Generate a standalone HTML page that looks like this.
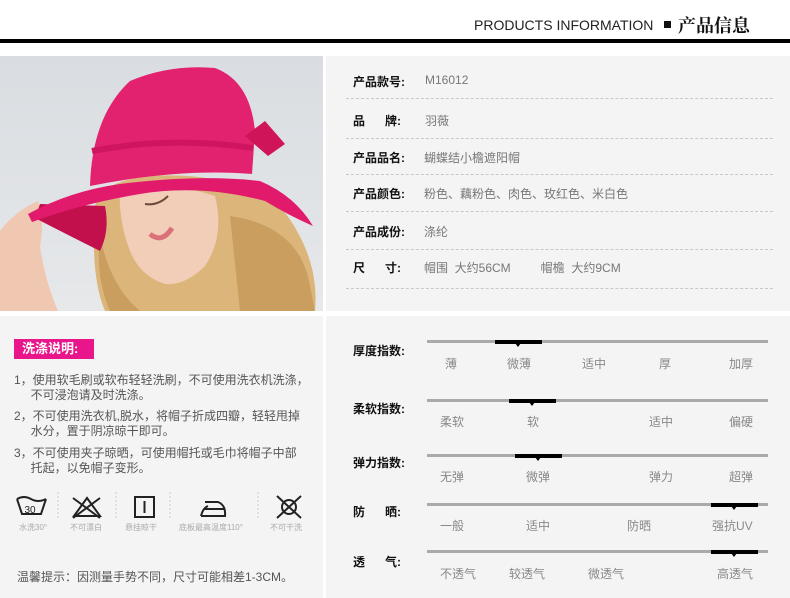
<!DOCTYPE html>
<html><head><meta charset="utf-8"><style>
*{margin:0;padding:0;box-sizing:border-box}
body{width:790px;height:598px;background:#fff;position:relative;overflow:hidden;font-family:"Liberation Sans","Noto Sans CJK SC",sans-serif}
.a{position:absolute;white-space:nowrap}
.lb{font-size:12px;font-weight:bold;color:#111}
.v{font-size:12px;color:#777}
.d{position:absolute;left:346px;width:427px;border-top:1px dashed #c8c8c8}
.bar{position:absolute;left:427px;width:341px;height:3px;background:#aaa}
.blk{position:absolute;height:4px;background:#000;width:47px}
.blk:after{content:"";position:absolute;left:20px;top:3px;border-left:3px solid transparent;border-right:3px solid transparent;border-top:4px solid #000}
.o{position:absolute;font-size:12px;color:#888;white-space:nowrap}
.t{font-size:12px;color:#555;line-height:15px}
.ic{position:absolute;top:522px;font-size:8px;color:#aaa;white-space:nowrap}
</style></head><body>
<div class="a" style="left:474px;top:17px;font-size:14px;color:#222">PRODUCTS INFORMATION</div>
<div class="a" style="left:664px;top:21px;width:7px;height:7px;background:#111"></div>
<div class="a" style="left:678px;top:12px;font-size:18px;font-weight:bold;color:#111;font-family:'Noto Serif CJK SC',serif">产品信息</div>
<div class="a" style="left:0;top:39px;width:790px;height:4px;background:#000"></div>

<svg class="a" style="left:0;top:56px" width="323" height="255" viewBox="0 0 323 255">
<defs><linearGradient id="bg" x1="0" y1="0" x2="0" y2="1"><stop offset="0" stop-color="#d9dde1"/><stop offset="1" stop-color="#e6e8ea"/></linearGradient></defs>
<rect width="323" height="255" fill="url(#bg)"/>
<path d="M95 150 Q100 125 150 120 Q230 115 280 150 Q320 200 315 255 L105 255 Q90 220 95 150Z" fill="#dcb57a"/>
<path d="M230 160 Q300 170 310 230 L315 255 L240 255Z" fill="#c99e5e"/>
<path d="M100 180 Q110 230 140 255 L110 255 Q95 220 100 180Z" fill="#c99e5e"/>
<path d="M120 130 Q170 125 215 140 Q225 180 205 210 Q185 230 165 228 Q140 220 130 195 Q118 165 120 130Z" fill="#f2cdb8"/>
<path d="M150 178 Q162 188 172 172" stroke="#d9707a" stroke-width="5" fill="none"/>
<path d="M145 148 Q158 150 168 140" stroke="#6a4a3a" stroke-width="2" fill="none"/>
<path d="M0 175 Q15 155 38 145 Q45 165 40 190 Q45 225 58 255 L0 255Z" fill="#f0c8b2"/>
<path d="M35 162 Q60 175 100 195 Q110 175 105 150 L40 148Z" fill="#c2104c"/>
<path d="M28 158 Q70 135 120 128 Q200 118 260 125 Q295 140 313 170 Q290 160 265 145 Q200 128 140 138 Q80 148 32 166Z" fill="#e11a6c"/>
<path d="M90 130 Q92 60 130 25 Q170 8 215 12 Q250 25 255 75 L252 118 Q180 112 90 130Z" fill="#e3226f"/>
<path d="M92 95 Q170 80 253 92" stroke="#cf1560" stroke-width="6" fill="none"/>
<path d="M245 80 L265 65 L285 88 L268 100Z" fill="#d0145a"/>
</svg>

<div class="a" style="left:326px;top:56px;width:464px;height:255px;background:#f4f4f4"></div>
<div class="a lb" style="left:353px;top:73px">产品款号:</div><div class="a v" style="left:425px;top:73px">M16012</div>
<div class="d" style="top:98px"></div>
<div class="a lb" style="left:353px;top:112px">品&nbsp;&nbsp;&nbsp;&nbsp;&nbsp;&nbsp;牌:</div><div class="a v" style="left:425px;top:112px">羽薇</div>
<div class="d" style="top:138px"></div>
<div class="a lb" style="left:353px;top:149px">产品品名:</div><div class="a v" style="left:424px;top:149px">蝴蝶结小檐遮阳帽</div>
<div class="d" style="top:174px"></div>
<div class="a lb" style="left:353px;top:185px">产品颜色:</div><div class="a v" style="left:424px;top:185px">粉色、藕粉色、肉色、玫红色、米白色</div>
<div class="d" style="top:211px"></div>
<div class="a lb" style="left:353px;top:223px">产品成份:</div><div class="a v" style="left:424px;top:223px">涤纶</div>
<div class="d" style="top:249px"></div>
<div class="a lb" style="left:353px;top:259px">尺&nbsp;&nbsp;&nbsp;&nbsp;&nbsp;&nbsp;寸:</div><div class="a v" style="left:424px;top:259px">帽围&nbsp; 大约56CM&nbsp;&nbsp;&nbsp;&nbsp;&nbsp;&nbsp;&nbsp;&nbsp; 帽檐&nbsp; 大约9CM</div>
<div class="d" style="top:288px"></div>

<div class="a" style="left:0;top:316px;width:323px;height:282px;background:#f4f4f4"></div>
<div class="a" style="left:14px;top:339px;width:80px;height:20px;background:#e8168a;color:#fff;font-size:13px;font-weight:bold;line-height:20px;padding-left:8px">洗涤说明:</div>
<div class="a t" style="left:14px;top:373px">1，使用软毛刷或软布轻轻洗刷，不可使用洗衣机洗涤，<br>&nbsp;&nbsp;&nbsp;&nbsp;&nbsp;不可浸泡请及时洗涤。</div>
<div class="a t" style="left:14px;top:409px">2，不可使用洗衣机,脱水，将帽子折成四瓣，轻轻甩掉<br>&nbsp;&nbsp;&nbsp;&nbsp;&nbsp;水分，置于阴凉晾干即可。</div>
<div class="a t" style="left:14px;top:446px">3，不可使用夹子晾晒，可使用帽托或毛巾将帽子中部<br>&nbsp;&nbsp;&nbsp;&nbsp;&nbsp;托起，以免帽子变形。</div>
<svg class="a" style="left:0;top:490px" width="323" height="32">
<g stroke="#222" stroke-width="2" fill="none">
<path d="M17 9 L22 24 H41 L46 9 M17 9 Q24 5 31 9 Q38 13 46 9"/>
<path d="M73 8 L100 28 M100 8 L73 28 M74 26 L87 8 L100 26 Z"/>
<rect x="135" y="7" width="19" height="20"/><path d="M144.5 11 V23"/>
<path d="M201 26 H225 Q226 15 218 12 H205 M204 19 H224 M201 26 Q203 18 208 16"/>
<circle cx="289" cy="17" r="7"/><path d="M277 6 L301 28 M301 6 L277 28"/>
</g>
<text x="30" y="23" font-size="10" text-anchor="middle" fill="#222" font-family="Liberation Sans">30</text>
<g stroke="#ccc" stroke-dasharray="2 2"><path d="M58 2V30M116 2V30M170 2V30M258 2V30"/></g>
</svg>
<div class="ic" style="left:19px">水洗30°</div>
<div class="ic" style="left:70px">不可漂白</div>
<div class="ic" style="left:125px">悬挂晾干</div>
<div class="ic" style="left:179px">底板最高温度110°</div>
<div class="ic" style="left:270px">不可干洗</div>
<div class="a t" style="left:17px;top:570px">温馨提示：因测量手势不同，尺寸可能相差1-3CM。</div>

<div class="a" style="left:326px;top:316px;width:464px;height:282px;background:#f4f4f4"></div>
<div class="a lb" style="left:353px;top:342px">厚度指数:</div>
<div class="bar" style="top:340px"></div><div class="blk" style="left:495px;top:340px"></div>
<div class="o" style="left:445px;top:355px">薄</div><div class="o" style="left:507px;top:355px">微薄</div><div class="o" style="left:582px;top:355px">适中</div><div class="o" style="left:659px;top:355px">厚</div><div class="o" style="left:729px;top:355px">加厚</div>
<div class="a lb" style="left:353px;top:400px">柔软指数:</div>
<div class="bar" style="top:399px"></div><div class="blk" style="left:509px;top:399px"></div>
<div class="o" style="left:440px;top:413px">柔软</div><div class="o" style="left:527px;top:413px">软</div><div class="o" style="left:649px;top:413px">适中</div><div class="o" style="left:729px;top:413px">偏硬</div>
<div class="a lb" style="left:353px;top:454px">弹力指数:</div>
<div class="bar" style="top:454px"></div><div class="blk" style="left:515px;top:454px"></div>
<div class="o" style="left:440px;top:468px">无弹</div><div class="o" style="left:526px;top:468px">微弹</div><div class="o" style="left:649px;top:468px">弹力</div><div class="o" style="left:729px;top:468px">超弹</div>
<div class="a lb" style="left:353px;top:503px">防&nbsp;&nbsp;&nbsp;&nbsp;&nbsp;&nbsp;晒:</div>
<div class="bar" style="top:503px"></div><div class="blk" style="left:711px;top:503px"></div>
<div class="o" style="left:440px;top:517px">一般</div><div class="o" style="left:526px;top:517px">适中</div><div class="o" style="left:627px;top:517px">防晒</div><div class="o" style="left:712px;top:517px">强抗UV</div>
<div class="a lb" style="left:353px;top:553px">透&nbsp;&nbsp;&nbsp;&nbsp;&nbsp;&nbsp;气:</div>
<div class="bar" style="top:550px"></div><div class="blk" style="left:711px;top:550px"></div>
<div class="o" style="left:440px;top:565px">不透气</div><div class="o" style="left:509px;top:565px">较透气</div><div class="o" style="left:588px;top:565px">微透气</div><div class="o" style="left:717px;top:565px">高透气</div>
</body></html>
